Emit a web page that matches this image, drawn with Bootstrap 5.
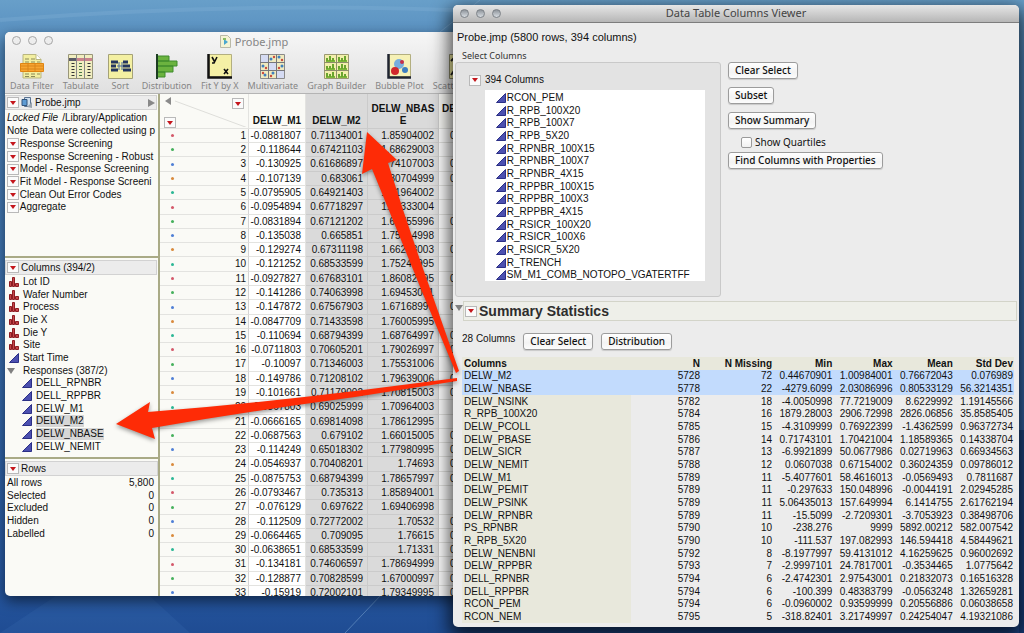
<!DOCTYPE html>
<html lang="en">
<head>
<meta charset="utf-8">
<meta name="viewport" content="width=device-width, initial-scale=1">
<title>Data Table Columns Viewer</title>
<link href="https://cdn.jsdelivr.net/npm/bootstrap@5.3.0/dist/css/bootstrap.min.css" rel="stylesheet">
<style>
  :root { --helv: "Liberation Sans", Arial, sans-serif; --lucida: "Noto Sans", "Open Sans", sans-serif; }
  body {
    font: 10px/12px var(--helv); color: #111; letter-spacing: normal;
    background: linear-gradient(180deg, #689fc9 0, #4f86bb 60px, #3d72b0 45%, #285aa3 90%, #1f4c93 100%);
  }
  .desktop { min-height: 100vh; }
  .beams, .arrows { inset: 0; pointer-events: none; }
  .arrows { z-index: 5; }
  .mac-win { border-radius: 5px; overflow: hidden; }
  .probe-win { left: 5px; top: 32px; bottom: 37px; width: 498px; background: #fafaf6; box-shadow: 0 5px 14px rgba(0,0,0,.55); }
  .viewer-win { left: 453px; right: 5px; top: 5px; bottom: 6px; z-index: 2; background: #ececec; box-shadow: 0 7px 18px 4px rgba(0,0,0,.7); }
  .title-text { font: 11px/16px var(--lucida); }
  .win-head { background: linear-gradient(#f6f6f6, #e0e0e0); border-bottom: 1px solid #b4b4b4; height: 62px; }
  .win-head .title-text { color: #858585; height: 19px; }
  .viewer-bar { height: 18px; background: linear-gradient(#e6e6e6, #b6b6b6); border-bottom: 1px solid #7d7d7d; color: #444; }
  .lights { left: 7px; top: 4px; gap: 7px; }
  .lights i { width: 9px; height: 9px; border-radius: 50%; border: 1px solid #a5a5a5; background: #ededed; }
  .viewer-bar .lights i { border-color: #7c8187; background: linear-gradient(#8e949b, #d8dde2); }
  .tool { border: 0; background: none; padding: 0; color: #868686; font: 9px/11px var(--lucida); white-space: nowrap; }
  .tool svg { display: block; margin: 0 auto 1px; }
  .toolbar-row { gap: 9px; padding: 3px 5px 0; }

  .side { width: 155px; border-right: 2px solid #a9aa86; }
  .pane { border-bottom: 2px solid #a9aa86; overflow: hidden; padding: 1px 1px 0 0; }
  .pane-script { height: 164px; }
  .pane-cols { height: 201px; padding-top: 2px; }
  .pane-rows { padding-top: 2px; }
  .pane-head { height: 15px; border: 1px solid #d2d2d2; background: #ececec; padding: 0 1px; gap: 2px; }
  .pane-script .pane-head { margin-bottom: 1px; }
  .lines li { height: 13px; display: flex; align-items: center; white-space: nowrap; }
  .lines li:nth-child(3n) { height: 12px; }
  .indent-1 { padding-left: 2px; }
  .indent-2 { padding-left: 17px; }
  .hot { width: 12px; height: 11px; border: 1px solid #b9b9b9; background: #fbfbfb; padding: 0; display: inline-flex; align-items: center; justify-content: center; flex: none; }
  .hot::before { content: ""; border: 3px solid transparent; border-top: 4px solid #c4161c; border-bottom: 0; }
  .twist { border: 4px solid transparent; border-top: 6px solid #808080; border-bottom: 0; width: 0; height: 0; padding: 0; background: none; flex: none; }
  .picked { background: #d6d6d6; }

  .grid { table-layout: fixed; width: 342px; border-collapse: separate; border-spacing: 0; }
  .grid th, .grid td { padding: 0 4px 0 0; text-align: right; border-bottom: 1px solid #e3e3e0; border-right: 1px solid #e3e3e0; line-height: 12px; vertical-align: middle; overflow: hidden; white-space: nowrap; }
  .grid thead th { height: 34px; text-align: center; vertical-align: bottom; padding: 0 0 1px; white-space: normal; }
  .grid tbody tr { height: 14px; }
  .grid tbody tr:nth-child(7n+3), .grid tbody tr:nth-child(7n+6) { height: 15px; }
  .grid tbody th { font-weight: 400; border-right-color: #d4d4d4; padding-right: 2px; }
  .grid td { background: #fff; }
  .grid .sel { background: #dadada; border-color: #cbcbcb; }
  .grid .next-col { text-align: left; padding-left: 11px; }
  .grid thead .next-col { padding-left: 3px; }
  .dot { width: 3px; height: 3px; border-radius: 50%; margin-left: 11px; }

  .viewer { padding: 8px 2px 0 2px; min-height: 0; }
  .lead-line { font-size: 11px; line-height: 12px; padding-left: 2px; }
  .group-name { font: 9px/12px var(--lucida); color: #333; padding: 7px 0 0 7px; }
  .group-box { width: 266px; height: 235px; background: #e3e3e3; border: 1px solid #c9c9c9; border-radius: 3px; padding: 11px 15px 0 13px; }
  .col-list { background: #fff; height: 191px; margin: 4px 0 0 16px; padding: 1px 0 0 11px; }
  .col-gap { gap: 7px; }
  .push { font: 500 10px/15px var(--lucida); color: #111; height: 17px; padding: 0 6px; border: 1px solid #9c9c9c; border-radius: 3px; background: linear-gradient(#fff, #f3f3f3 60%, #fcfcfc); box-shadow: 0 1px 1px rgba(0,0,0,.15); white-space: nowrap; }
  .tick { appearance: none; width: 11px; height: 11px; margin: 0; border: 1px solid #9a9a9a; border-radius: 2px; background: linear-gradient(#fff, #f1f1f1); }
  .quart { font: 10px/12px var(--lucida); gap: 3px; padding: 7px 0 4px 13px; }
  .sum-title { border: 1px solid #d3d4c9; background: #eeefe9; height: 20px; gap: 2px; padding-left: 1px; }
  .sum-title h2 { font: 700 14px/18px var(--helv); color: #2d2d2d; margin: 0; }
  .sum-tools { padding: 8px 0 7px 7px; }
  .stats { table-layout: fixed; width: calc(100% - 10px); margin-left: 7px; }
  .stats th, .stats td { padding: 0 1px 0 0; line-height: 12px; text-align: right; white-space: nowrap; vertical-align: middle; }
  .stats th:first-child { text-align: left; padding-left: 2px; background: #e8e8dc; }
  .stats thead th { background: #e8e8dc; }
  .stats tr { height: 13px; }
  .stats tbody tr:nth-child(3n+1) { height: 12px; }
  .stats tbody th { font-weight: 400; }
  .stats .on th:first-child, .stats .on td { background: #c2dbfd; }
</style>
</head>
<body>
<svg width="0" height="0" class="position-absolute" aria-hidden="true">
  <symbol id="cont" viewBox="0 0 10 10"><path d="M.5 9.500 9.500.5v9z" fill="#4c50b0" stroke="#2b2f86"/></symbol>
  <symbol id="nom" viewBox="0 0 10 10"><path d="M.5 4.500h2v5h-2zM3.500.500h2v9h-2zM6.500 6.500h3v3h-3z" fill="#c4474a" stroke="#8e1c22"/></symbol>
</svg>
<main class="desktop position-relative overflow-hidden">
  <svg class="beams position-absolute w-100 h-100" aria-hidden="true">
    <path d="M0 20Q250 0 500 12" stroke="#8db9da" stroke-opacity=".25" stroke-width="4" fill="none"/>
    <path d="M440 32 480 0M345 633 400 575" stroke="#9cc4e6" stroke-opacity=".4" fill="none"/>
    <path d="M0 633 110 560 190 633z" fill="#4a7fc4" fill-opacity=".15"/>
    <path d="M1019 430h5v203h-5z" fill="#12356f" fill-opacity=".6"/>
  </svg>

  <section class="mac-win probe-win position-absolute d-flex flex-column" aria-label="Probe.jmp">
    <header class="win-head position-relative flex-shrink-0">
      <div class="lights position-absolute d-flex"><i></i><i></i><i></i></div>
      <div class="title-text d-flex align-items-center justify-content-center gap-1">
        <svg width="11" height="13" viewBox="0 0 11 13"><path d="M.5.500h7l3 3v9H.500z" fill="#f5f3d4" stroke="#b9b9a8"/><path d="M4 4v6l4-3z" fill="#4aa7cf"/><path d="M3 3h3v2H3z" fill="#89bd62"/></svg>
        <span>Probe.jmp</span>
      </div>
      <div class="toolbar-row d-flex">
        <button class="tool"><svg width="24" height="25" viewBox="0 0 24 25"><path d="M3 .500h13l5 5v18.500H3z" fill="#f3efa0" stroke="#b9b680"/><path d="M16 .500v5h5" fill="#fff" stroke="#b9b680"/><path d="M5 5h4m2 0h4M5 8h4m2 0h4m2 0h3M5 20h4m2 0h4m2 0h3M5 22.500h4m2 0h4" stroke="#8b8a58"/><path d="M.5 9.500h23v8H.500z" fill="#f7a531" stroke="#e08512"/><path d="M1 12h22M1 15h22M8 9v9M15 9v9" stroke="#d9851a"/></svg>Data Filter</button>
        <button class="tool"><svg width="25" height="25" viewBox="0 0 25 25"><path d="M.5.500h24v24H.500z" fill="#f1eec0" stroke="#99967a"/><path d="M1 4h23v3H1z" fill="#c9828d"/><path d="M1 4h7v3H1z" fill="#5a5a66"/><path d="M8.500 1v23M16.500 1v23" stroke="#888"/><path d="M5 9v14M21 9v14" stroke="#333" stroke-width="3" stroke-dasharray="1 2"/><path d="M12.500 9v14" stroke="#4a7a45" stroke-width="3" stroke-dasharray="1 2"/></svg>Tabulate</button>
        <button class="tool"><svg width="25" height="25" viewBox="0 0 25 25"><path d="M.5.500h24v24H.500z" fill="#f4f0a2" stroke="#a5a277"/><path d="M3 8h7M3 12h5M3 16h7M15 8h5M15 12h7M15 16h8" stroke="#26375f" stroke-width="3"/><path d="M11 8v8M9 12h6M14 8v8" stroke="#4a6aa0"/></svg>Sort</button>
        <button class="tool"><svg width="24" height="25" viewBox="0 0 24 25"><path d="M2 2h12v5H2zM2 7h20v5H2zM2 12h16v6H2zM2 18h8v5H2z" fill="#6bb33f" stroke="#3f8b2d"/><path d="M2 0v25" stroke="#1d3d22" stroke-width="2"/></svg>Distribution</button>
        <button class="tool"><svg width="25" height="25" viewBox="0 0 25 25"><path d="M2 .500h22.500V23H2z" fill="#f5f0a5" stroke="#b3af80"/><path d="M1.500 0v23.500H25" stroke="#111" stroke-width="2.500" fill="none"/><path d="m5 3 2.500 4.500M10 3 7 9H5M17 15l4 5m0-5-4 5" stroke="#111" stroke-width="1.600" fill="none"/></svg>Fit Y by X</button>
        <button class="tool"><svg width="25" height="25" viewBox="0 0 25 25"><path d="M.5.500h24v24H.500z" fill="#f0eabf" stroke="#8a8a8a"/><path d="M1 1h7v7H1zM9 9h7v7H9zM17 17h7v7h-7z" fill="#d5dbf3"/><path d="M8.500 0v25M16.500 0v25M0 8.500h25M0 16.500h25" stroke="#77777a"/><g fill="#3f81bd"><circle cx="11" cy="5" r="1.500"/><circle cx="19" cy="3" r="1.500"/><circle cx="3" cy="12" r="1.500"/><circle cx="22" cy="12" r="1.500"/><circle cx="5" cy="21" r="1.500"/><circle cx="13" cy="19" r="1.500"/></g><g fill="#cb4a3c"><circle cx="14" cy="3" r="1.200"/><circle cx="22" cy="6" r="1.200"/><circle cx="6" cy="14" r="1.200"/><circle cx="19" cy="14" r="1.200"/><circle cx="3" cy="19" r="1.200"/><circle cx="11" cy="22" r="1.200"/></g></svg>Multivariate</button>
        <button class="tool"><svg width="25" height="25" viewBox="0 0 25 25"><path d="M.5.500h24v24H.500z" fill="#f2efab" stroke="#9b9970"/><path d="M12.500 0v25M0 8.500h25M0 16.500h25" stroke="#8f8d6b"/><path d="M2 7h9m3 0h9M2 15h9m3 0h9M2 23h9m3 0h9" stroke="#7eb83a" stroke-width="2"/><path d="M3 7V4m3 3V2m3 5V4m6 3V3m3 4V4m3 3V2M3 15v-3m3 3v-3m3 3v-5m6 5v-3m3 3v-5m3 5v-4M3 23v-4m3 4v-3m3 3v-5m6 5v-3m3 3v-5m3 5v-3" stroke="#6aa52e" stroke-width="2"/></svg>Graph Builder</button>
        <button class="tool"><svg width="24" height="25" viewBox="0 0 24 25"><path d="M2 .500h21.500V23H2z" fill="#f6f1b6" stroke="#b3af80"/><path d="M1.500 0v23.500H24" stroke="#1f2430" stroke-width="2.500" fill="none"/><circle cx="12" cy="10" r="5" fill="#78aedd"/><circle cx="8" cy="17" r="4" fill="#d0282c"/><circle cx="18" cy="16" r="3" fill="#3d7fc1"/><circle cx="15" cy="8" r="2" fill="#c5304a"/></svg>Bubble Plot</button>
        <button class="tool text-start"><svg class="ms-3" width="25" height="25" viewBox="0 0 25 25"><path d="M.5.500h24v24H.500z" fill="#f5f0a5" stroke="#8d8b6a"/><path d="m2 7 5-5M2 21l5-7" stroke="#222" stroke-width="2"/></svg>Scatter</button>
      </div>
    </header>
    <div class="d-flex flex-grow-1 overflow-hidden">
      <aside class="side d-flex flex-column flex-shrink-0">
        <div class="pane pane-script flex-shrink-0">
          <div class="pane-head d-flex align-items-center">
            <button class="hot" aria-label="Table menu"></button>
            <svg width="12" height="12" viewBox="0 0 12 12"><path d="M3.500.500h6v9h-6z" fill="#cfe0ef" stroke="#5b7390"/><path d="M1 2.500h5v6H1z" fill="#5d9bd3" stroke="#33557c"/><path d="m6 10 5-5v6z" fill="#9aa5b0"/></svg>
            <span class="flex-grow-1">Probe.jmp</span>
            <svg width="7" height="8"><path d="M0 0 7 4 0 8z" fill="#888"/></svg>
          </div>
          <ul class="lines list-unstyled m-0 indent-1">
            <li class="gap-1"><em>Locked File</em> /Library/Application</li>
            <li class="gap-1"><span>Note</span> Data were collected using p</li>
          </ul>
          <ul class="lines list-unstyled m-0 indent-1" id="scripts"></ul>
        </div>
        <div class="pane pane-cols flex-shrink-0">
          <div class="pane-head d-flex align-items-center"><button class="hot" aria-label="Columns menu"></button>Columns (394/2)</div>
          <ul class="lines list-unstyled m-0" id="cols"></ul>
        </div>
        <div class="pane-rows pe-0">
          <div class="pane-head d-flex align-items-center"><button class="hot" aria-label="Rows menu"></button>Rows</div>
          <ul class="lines list-unstyled m-0 indent-1">
            <li class="justify-content-between pe-1"><span>All rows</span><span>5,800</span></li>
            <li class="justify-content-between pe-1"><span>Selected</span><span>0</span></li>
            <li class="justify-content-between pe-1"><span>Excluded</span><span>0</span></li>
            <li class="justify-content-between pe-1"><span>Hidden</span><span>0</span></li>
            <li class="justify-content-between pe-1"><span>Labelled</span><span>0</span></li>
          </ul>
        </div>
      </aside>
      <div class="overflow-hidden flex-grow-1">
        <table class="grid">
          <colgroup><col style="width:89px"><col style="width:57px"><col style="width:62px"><col style="width:71px"><col></colgroup>
          <thead><tr>
            <th class="position-relative">
              <svg class="d-block w-100" height="33" viewBox="0 0 88 33" aria-hidden="true"><path d="m11 3-6 4 6 4z" fill="#8a8a8a"/><path d="m15 7 73 27" stroke="#dededa"/></svg>
              <button class="hot position-absolute top-0 end-0 mt-1 me-1" aria-label="Column options"></button>
              <button class="hot position-absolute bottom-0 start-0 ms-1" aria-label="Row options"></button>
            </th>
            <th>DELW_M1</th><th class="sel">DELW_M2</th><th class="sel">DELW_NBAS<br>E</th><th class="next-col">DELW<br>&nbsp;</th>
          </tr></thead>
          <tbody id="grid"></tbody>
        </table>
      </div>
    </div>
  </section>

  <section class="mac-win viewer-win position-absolute d-flex flex-column" aria-label="Data Table Columns Viewer">
    <header class="viewer-bar title-text position-relative text-center flex-shrink-0">
      <div class="lights position-absolute d-flex"><i></i><i></i><i></i></div>
      Data Table Columns Viewer
    </header>
    <div class="viewer">
      <div class="lead-line">Probe.jmp (5800 rows, 394 columns)</div>
      <div class="group-name">Select Columns</div>
      <div class="d-flex col-gap">
        <div class="group-box flex-shrink-0">
          <div class="d-flex align-items-center gap-1"><button class="hot" aria-label="Column list menu"></button>394 Columns</div>
          <div class="col-list"><ul class="lines list-unstyled m-0" id="picker"></ul></div>
        </div>
        <div class="d-flex flex-column align-items-start">
          <button class="push mb-2">Clear Select</button>
          <button class="push mb-2">Subset</button>
          <button class="push">Show Summary</button>
          <div class="quart d-flex align-items-center"><input class="tick" type="checkbox" id="quartiles"><label for="quartiles">Show Quartiles</label></div>
          <button class="push">Find Columns with Properties</button>
        </div>
      </div>
      <div class="d-flex mt-1">
        <button class="twist mt-1" aria-label="Collapse"></button>
        <div class="sum-title d-flex align-items-center flex-grow-1"><button class="hot" aria-label="Summary menu"></button><h2>Summary Statistics</h2></div>
      </div>
      <div class="sum-tools d-flex mt-1">
        <span class="me-1">28 Columns</span>
        <button class="push ms-1 me-2">Clear Select</button>
        <button class="push">Distribution</button>
      </div>
      <table class="stats">
        <colgroup><col style="width:169px"><col style="width:70px"><col style="width:72px"><col><col><col><col></colgroup>
        <thead><tr><th>Columns</th><th>N</th><th>N Missing</th><th>Min</th><th>Max</th><th>Mean</th><th>Std Dev</th></tr></thead>
        <tbody id="stats"></tbody>
      </table>
    </div>
  </section>

  <svg class="arrows position-absolute w-100 h-100" aria-hidden="true">
    <g fill="#fe2b06" style="filter:drop-shadow(0 2px 2px rgba(0,0,0,.4))">
      <path d="M367 132 397 160 388 163Q408 227 432 294L459 371 456 373 423 294Q395 225 372 169L362 174z"/>
      <path d="M116 424 150 402 148 412Q250 404 355 391L457 378V381L355 397Q250 411 152 428L155 439z"/>
    </g>
  </svg>
</main>
<script>
  const icon = (id, n) => `<svg width="${n}" height="${n}" class="flex-shrink-0"><use href="#${id}"/></svg>`;
  const fill = (id, html) => { document.getElementById(id).innerHTML = html; };

  fill('scripts', ['Response Screening', 'Response Screening - Robust', 'Model - Response Screening', 'Fit Model - Response Screeni', 'Clean Out Error Codes', 'Aggregate']
    .map(t => `<li><button class="hot" aria-label="Run ${t}"></button><span>&hairsp;${t}</span></li>`).join(''));

  const picked = ['DELW_M2', 'DELW_NBASE'];
  fill('cols',
    ['Lot ID', 'Wafer Number', 'Process', 'Die X', 'Die Y', 'Site'].map(t => `<li class="gap-1 ps-1">${icon('nom', 10)}${t}</li>`).join('') +
    `<li class="gap-1 ps-1">${icon('cont', 10)}Start Time</li>` +
    `<li class="indent-1"><button class="twist me-2" aria-label="Collapse responses"></button>Responses (387/2)</li>` +
    ['DELL_RPNBR', 'DELL_RPPBR', 'DELW_M1', 'DELW_M2', 'DELW_NBASE', 'DELW_NEMIT']
      .map(t => `<li class="gap-1 indent-2">${icon('cont', 10)}<span class="${picked.includes(t) ? 'picked' : ''}">${t}</span></li>`).join(''));

  fill('picker', 'RCON_PEM R_RPB_100X20 R_RPB_100X7 R_RPB_5X20 R_RPNBR_100X15 R_RPNBR_100X7 R_RPNBR_4X15 R_RPPBR_100X15 R_RPPBR_100X3 R_RPPBR_4X15 R_RSICR_100X20 R_RSICR_100X6 R_RSICR_5X20 R_TRENCH SM_M1_COMB_NOTOPO_VGATERTFF'
    .split(' ').map(t => `<li>${icon('cont', 10)}<span>&hairsp;${t}</span></li>`).join(''));

  const rows = `-0.0881807 0.71134001 1.85904002 0
-0.118644 0.67421103 1.68629003
-0.130925 0.61686897 1.74107003 0
-0.107139 0.683061 1.80704999 0
-0.0795905 0.64921403 1.81964002
-0.0954894 0.67718297 1.72333004
-0.0831894 0.67121202 1.66755996 0
-0.135038 0.665851 1.75414998
-0.129274 0.67311198 1.66248003 0
-0.121252 0.68533599 1.75247995
-0.0927827 0.67683101 1.86082995 0
-0.141286 0.74063998 1.69453001
-0.147872 0.67567903 1.67168999 0
-0.0847709 0.71433598 1.76005995
-0.110694 0.68794399 1.68764997 0
-0.0711803 0.70605201 1.79026997 0
-0.10097 0.71346003 1.75531006
-0.149786 0.71208102 1.79639006 0
-0.101661 0.71179002 1.70815003 0
-0.0867803 0.69025999 1.70964003
-0.0666165 0.69814098 1.78612995
-0.0687563 0.679102 1.66015005 0
-0.114249 0.65018302 1.77980995 0
-0.0546937 0.70408201 1.74693 0
-0.0875753 0.68794399 1.78657997 0
-0.0793467 0.735313 1.85894001
-0.076129 0.697622 1.69406998
-0.112509 0.72772002 1.70532 0
-0.0664465 0.709095 1.76615 0
-0.0638651 0.68533599 1.71331 0
-0.134181 0.74606597 1.78694999 0
-0.128877 0.70828599 1.67000997 0
-0.15919 0.72002101 1.79349995 0`.split('\n').map(r => r.split(' '));
  const dots = ['#d4586a', '#45b05c', '#4f7fd6', '#d98a3d', '#2bb795'];
  fill('grid', rows.map(([a, b, c, d = ''], i) =>
    `<tr><th scope="row"><div class="d-flex align-items-center justify-content-between"><i class="dot" style="background:${dots[i % 5]}"></i>${i + 1}</div></th><td>${a}</td><td class="sel">${b}</td><td class="sel">${c}</td><td class="next-col">${d}</td></tr>`).join(''));

  const stats = `DELW_M2 5728 72 0.44670901 1.00984001 0.76672043 0.076989
DELW_NBASE 5778 22 -4279.6099 2.03086996 0.80533129 56.3214351
DELW_NSINK 5782 18 -4.0050998 77.7219009 8.6229992 1.19145566
R_RPB_100X20 5784 16 1879.28003 2906.72998 2826.06856 35.8585405
DELW_PCOLL 5785 15 -4.3109999 0.76922399 -1.4362599 0.96372734
DELW_PBASE 5786 14 0.71743101 1.70421004 1.18589365 0.14338704
DELW_SICR 5787 13 -6.9921899 50.0677986 0.02719963 0.66934563
DELW_NEMIT 5788 12 0.0607038 0.67154002 0.36024359 0.09786012
DELW_M1 5789 11 -5.4077601 58.4616013 -0.0569493 0.7811687
DELW_PEMIT 5789 11 -0.297633 150.048996 -0.0044191 2.02945285
DELW_PSINK 5789 11 5.06435013 157.649994 6.1414755 2.61762194
DELW_RPNBR 5789 11 -15.5099 -2.7209301 -3.7053923 0.38498706
PS_RPNBR 5790 10 -238.276 9999 5892.00212 582.007542
R_RPB_5X20 5790 10 -111.537 197.082993 146.594418 4.58449621
DELW_NENBNI 5792 8 -8.1977997 59.4131012 4.16259625 0.96002692
DELW_RPPBR 5793 7 -2.9997101 24.7817001 -0.3534465 1.0775642
DELL_RPNBR 5794 6 -2.4742301 2.97543001 0.21832073 0.16516328
DELL_RPPBR 5794 6 -100.399 0.48383799 -0.0563248 1.32659281
RCON_PEM 5794 6 -0.0960002 0.93599999 0.20556886 0.06038658
RCON_NEM 5795 5 -318.82401 3.21749997 0.24254047 4.19321086`.split('\n').map(r => r.split(' '));
  fill('stats', stats.map(([n, ...v]) => `<tr class="${picked.includes(n) ? 'on' : ''}"><th scope="row">${n}</th>${v.map(x => `<td>${x}</td>`).join('')}</tr>`).join(''));
</script>
<script src="https://cdn.jsdelivr.net/npm/bootstrap@5.3.0/dist/js/bootstrap.bundle.min.js"></script>
</body>
</html>
